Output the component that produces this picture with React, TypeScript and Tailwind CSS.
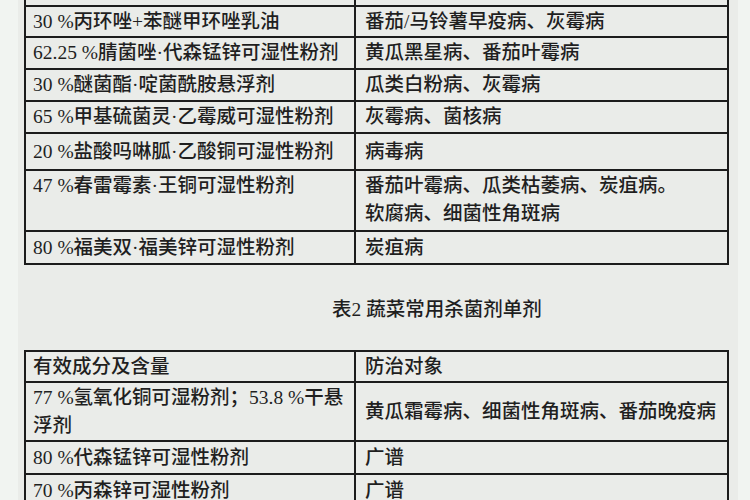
import React from "react";

type Row = { h: string; left: React.ReactNode; right: React.ReactNode; top?: boolean; center?: boolean };

const font = { fontFamily: '"Liberation Serif", "Noto Sans CJK SC", serif' };

function Table({ rows, topBorder }: { rows: Row[]; topBorder?: boolean }) {
  return (
    <div
      className={`ml-[6px] w-[705px] border-l-2 border-r-2 border-[#1c1c1c] ${topBorder ? "border-t-2" : ""}`}
    >
      {rows.map((r, i) => (
        <div key={i} className={`flex border-b-2 border-[#1c1c1c] ${r.h}`}>
          <div
            className={`w-[330px] shrink-0 border-r-2 border-[#1c1c1c] pl-[7px] flex ${
              r.top ? "items-start pt-[1px]" : "items-center"
            }`}
          >
            <div className="leading-[28px]">{r.left}</div>
          </div>
          <div className={`flex-1 pl-[9px] flex ${r.top ? "items-start pt-[1px]" : "items-center"}`}>
            <div className="leading-[28px]">{r.right}</div>
          </div>
        </div>
      ))}
    </div>
  );
}

export default function App() {
  const t1: Row[] = [
    { h: "h-[7px]", left: null, right: null },
    { h: "h-[31px]", left: "30 %丙环唑+苯醚甲环唑乳油", right: "番茄/马铃薯早疫病、灰霉病" },
    { h: "h-[32px]", left: "62.25 %腈菌唑·代森锰锌可湿性粉剂", right: "黄瓜黑星病、番茄叶霉病" },
    { h: "h-[32px]", left: "30 %醚菌酯·啶菌酰胺悬浮剂", right: "瓜类白粉病、灰霉病" },
    { h: "h-[32px]", left: "65 %甲基硫菌灵·乙霉威可湿性粉剂", right: "灰霉病、菌核病" },
    { h: "h-[37px]", left: "20 %盐酸吗啉胍·乙酸铜可湿性粉剂", right: "病毒病" },
    {
      h: "h-[61px]",
      top: true,
      left: "47 %春雷霉素·王铜可湿性粉剂",
      right: (
        <>
          番茄叶霉病、瓜类枯萎病、炭疽病。
          <br />
          软腐病、细菌性角斑病
        </>
      ),
    },
    { h: "h-[33px]", left: "80 %福美双·福美锌可湿性粉剂", right: "炭疽病" },
  ];

  const t2: Row[] = [
    { h: "h-[31px]", left: "有效成分及含量", right: "防治对象" },
    {
      h: "h-[59px]",
      left: (
        <>
          77 %氢氧化铜可湿粉剂；53.8 %干悬
          <br />
          浮剂
        </>
      ),
      right: "黄瓜霜霉病、细菌性角斑病、番茄晚疫病",
    },
    { h: "h-[33px]", left: "80 %代森锰锌可湿性粉剂", right: "广谱" },
    { h: "h-[33px]", left: "70 %丙森锌可湿性粉剂", right: "广谱" },
  ];

  return (
    <div
      className="w-[750px] h-[500px] overflow-hidden bg-[#f1f4f1] flex text-[19.5px] font-medium text-[#1f1f1f]"
      style={font}
    >
      <div className="ml-[18px] w-[720px] h-full bg-[#eaece9] flex flex-col">
        <Table rows={t1} />
        <div className="mt-[31px] pl-[314px] leading-[28px] h-[28px] whitespace-nowrap">
          表2 蔬菜常用杀菌剂单剂
        </div>
        <div className="mt-[26px]">
          <Table rows={t2} topBorder />
        </div>
      </div>
    </div>
  );
}
